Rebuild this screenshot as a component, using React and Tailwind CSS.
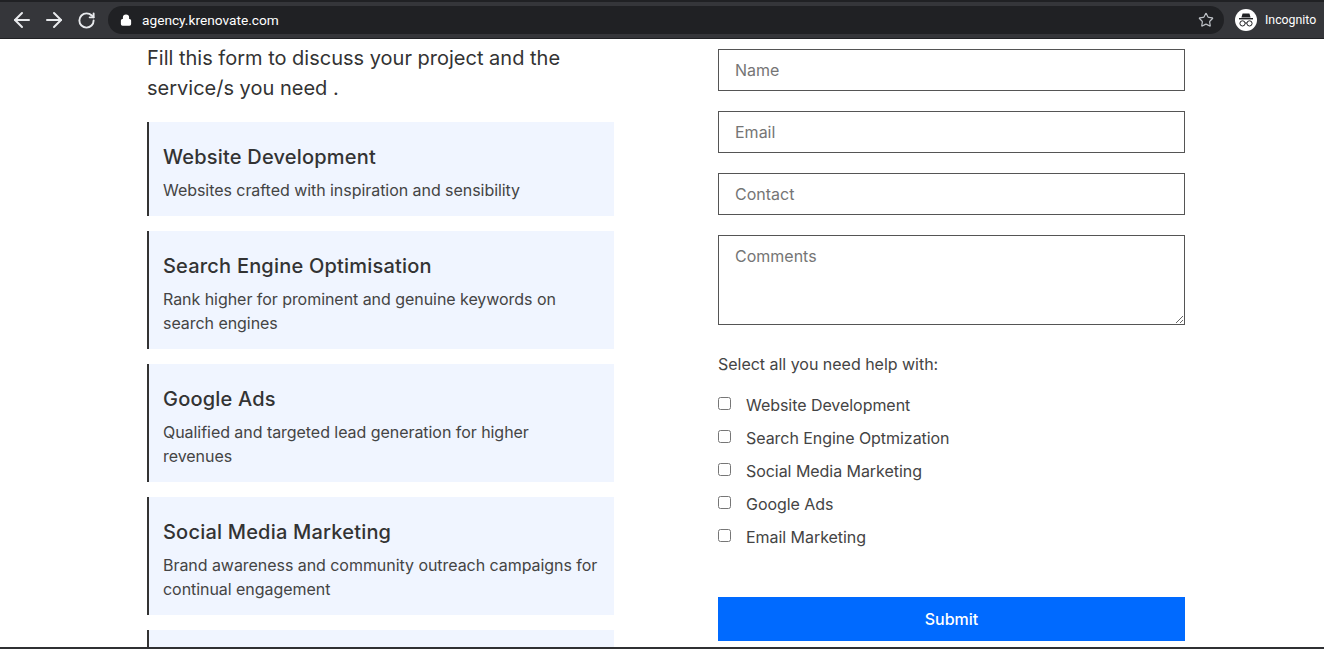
import { ArrowLeft, ArrowRight, RotateCw, Lock, Star } from 'lucide-react';

const SERVICES = [
  { title: 'Website Development', text: 'Websites crafted with inspiration and sensibility' },
  { title: 'Search Engine Optimisation', text: 'Rank higher for prominent and genuine keywords on search engines' },
  { title: 'Google Ads', text: 'Qualified and targeted lead generation for higher revenues' },
  { title: 'Social Media Marketing', text: 'Brand awareness and community outreach campaigns for continual engagement' },
];

const OPTIONS = ['Website Development', 'Search Engine Optmization', 'Social Media Marketing', 'Google Ads', 'Email Marketing'];

function IncognitoIcon() {
  return (
    <svg width="22" height="22" viewBox="0 0 22 22" className="shrink-0">
      <circle cx="11" cy="11" r="11" fill="#fff" />
      <path d="M7.6 4.5h6.8l1.2 4H6.4z" fill="#202124" />
      <rect x="4" y="9" width="14" height="1.4" fill="#202124" />
      <circle cx="7.5" cy="14.4" r="2.6" fill="none" stroke="#202124" strokeWidth="1" />
      <circle cx="14.5" cy="14.4" r="2.6" fill="none" stroke="#202124" strokeWidth="1" />
      <path d="M10 14h2" stroke="#202124" strokeWidth="1" />
    </svg>
  );
}

function Toolbar() {
  return (
    <div className="h-[39px] shrink-0 flex items-center bg-[#35363a] border-t-2 border-t-[#202124] border-b border-b-[#202124] font-['Roboto',sans-serif]">
      <div className="flex items-center gap-[8px] pl-[10px] text-[#e8eaed]">
        <div className="w-[24px] flex justify-center"><ArrowLeft size={24} strokeWidth={2} /></div>
        <div className="w-[24px] flex justify-center"><ArrowRight size={24} strokeWidth={2} /></div>
        <div className="w-[24px] flex justify-center"><RotateCw size={19} strokeWidth={2.4} /></div>
      </div>
      <div className="ml-[10px] w-[1116px] h-[28px] rounded-full bg-[#202124] flex items-center pl-[12px] pr-[10px] text-white">
        <Lock size={12} strokeWidth={2.5} fill="#fff" />
        <span className="ml-[10px] text-[13.7px]">agency.krenovate.com</span>
        <Star size={16} className="ml-auto text-[#bdc1c6]" strokeWidth={1.8} />
      </div>
      <div className="ml-[11px] flex items-center gap-[8px] text-white text-[12.3px]">
        <IncognitoIcon />
        <span>Incognito</span>
      </div>
    </div>
  );
}

function ServiceCard({ title, text }) {
  return (
    <div className="bg-[#f0f5ff] border-l-2 border-[#333] pl-[14px] pr-[14px] pt-[20px] pb-[14px]">
      <h3 className="text-[20px] leading-[30px] font-[550] tracking-[0.2px] text-[#333]">{title}</h3>
      <p className="mt-[6px] text-[16px] leading-[24px] tracking-[-0.05px] text-[#444]">{text}</p>
    </div>
  );
}

function FieldBox({ placeholder }) {
  return (
    <input
      placeholder={placeholder}
      className="block w-full h-[42px] border border-[#555] px-[16px] text-[16px] text-[#333] placeholder:text-[#757575] outline-none"
    />
  );
}

export default function App() {
  return (
    <div className="h-[649px] flex flex-col overflow-hidden bg-white font-['Inter',sans-serif]">
      <Toolbar />
      <div className="flex-1 min-h-0 overflow-hidden flex pl-[147px] gap-[104px]">
        <div className="w-[467px] shrink-0 pt-[4px]">
          <p className="text-[20px] leading-[30px] text-[#333] mb-[19px]">
            Fill this form to discuss your project and the service/s you need .
          </p>
          <div className="flex flex-col gap-[15px]">
            {SERVICES.map((s) => (
              <ServiceCard key={s.title} title={s.title} text={s.text} />
            ))}
            {/* next card starts right at the fold, only its top shows */}
            <div className="h-[94px] shrink-0 bg-[#f0f5ff] border-l-2 border-[#333]" />
          </div>
        </div>

        <form className="w-[467px] shrink-0 pt-[10px]">
          <div className="flex flex-col gap-[20px]">
            <FieldBox placeholder="Name" />
            <FieldBox placeholder="Email" />
            <FieldBox placeholder="Contact" />
            <textarea
              placeholder="Comments"
              className="block w-full h-[90px] border border-[#555] px-[16px] py-[8px] text-[16px] leading-[24px] placeholder:text-[#757575] outline-none"
            />
          </div>
          <p className="mt-[27px] text-[16px] leading-[24px] tracking-[-0.02px] text-[#444]">Select all you need help with:</p>
          <div className="mt-[12px] flex flex-col">
            {OPTIONS.map((o) => (
              <label key={o} className="h-[33px] flex items-center text-[16px] tracking-[-0.05px] text-[#444]">
                <input type="checkbox" className="w-[13px] h-[13px] mb-[3px]" />
                <span className="ml-[15px]">{o}</span>
              </label>
            ))}
          </div>
          <button type="button" className="mt-[44px] w-full h-[44px] bg-[#006aff] text-white text-[16px] font-medium">
            Submit
          </button>
        </form>
      </div>
      <div className="h-[2px] shrink-0 bg-[#2f3033]" />
    </div>
  );
}
